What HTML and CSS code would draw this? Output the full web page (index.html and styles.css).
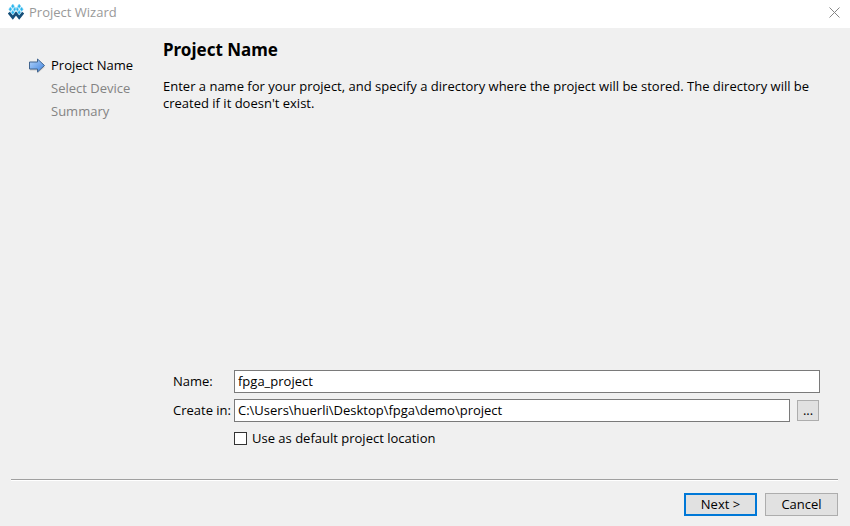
FILE: index.html
```html
<!DOCTYPE html>
<html lang="en">
<head>
<meta charset="utf-8">
<title>Project Wizard</title>
<link rel="stylesheet" href="styles.css">
</head>
<body>
<header class="titlebar">
  <svg class="logo" viewBox="0 0 16 16" aria-hidden="true">
    <path d="M.8 8.500 4.800 13.500 8 9.500 11.200 13.500 15.200 8.500" fill="none" stroke="#164f79" stroke-width="2.800"/>
    <path d="M4.800 0 6.400 2.200 4.800 4.400 3.200 2.200ZM2.400 3 4 5.200 2.400 7.400.8 5.200ZM7 3 8 5.200 6.500 7.400 5.300 5.200ZM4.800 6.200 6.400 8.400 4.800 10.600 3.200 8.400ZM11.200 0 12.800 2.200 11.200 4.400 9.600 2.200ZM13.600 3 15.200 5.200 13.600 7.400 12 5.200ZM9 3 10.700 5.200 9.500 7.400 8 5.200ZM11.200 6.200 12.800 8.400 11.200 10.600 9.600 8.400Z" fill="#29b4ec" stroke="#7fd4f5" stroke-width=".6"/>
  </svg>
  <span class="title">Project Wizard</span>
  <button class="close" type="button" aria-label="Close">
    <svg viewBox="0 0 11 11" aria-hidden="true"><path d="M.5.5l10 10M10.500.5l-10 10" stroke="#858585" fill="none"/></svg>
  </button>
</header>
<div class="wizard">
  <nav class="steps">
    <ol>
      <li class="current">
        <svg class="arrow" viewBox="0 0 17 16" aria-hidden="true">
          <defs><linearGradient id="blue" x1="0" y1="0" x2="1" y2="1"><stop offset="0" stop-color="#b4d5fb"/><stop offset="1" stop-color="#3f83df"/></linearGradient></defs>
          <path d="M2 5.500H9.500V2.500L17 9 9.500 15.500V12.500H2Z" fill="#000" opacity=".15"/>
          <path d="M1.500 4H9.500V1L16.500 7.500 9.500 14V11H1.500Z" fill="url(#blue)" stroke="#41658f"/>
        </svg>
        Project Name
      </li>
      <li>Select Device</li>
      <li>Summary</li>
    </ol>
  </nav>
  <main class="page">
    <h1>Project Name</h1>
    <p>Enter a name for your project, and specify a directory where the project will be stored. The directory will be created if it doesn't exist.</p>
    <form class="fields" id="project">
      <label for="name">Name:</label>
      <input class="text" id="name" type="text" value="fpga_project">
      <label for="location">Create in:</label>
      <div class="location">
        <input class="text" id="location" type="text" value="C:\Users\huerli\Desktop\fpga\demo\project">
        <button class="browse" type="button" aria-label="Browse">...</button>
      </div>
      <div class="default">
        <input id="default" type="checkbox">
        <label for="default">Use as default project location</label>
      </div>
    </form>
  </main>
</div>
<footer class="actions">
  <button class="primary" type="submit" form="project">Next &gt;</button>
  <button type="button">Cancel</button>
</footer>
</body>
</html>
```
FILE: styles.css
```css
* {
  box-sizing: border-box;
}

body {
  margin: 0;
  min-height: 100vh;
  display: flex;
  flex-direction: column;
  background: #f0f0f0;
  color: #000;
  font: 13px/17px "Open Sans", "Noto Sans", sans-serif;
}

button,
input {
  font: inherit;
  color: inherit;
}

.titlebar {
  display: flex;
  align-items: center;
  height: 28px;
  padding: 0 10px 4px 8px;
  background: #fff;
  color: #999;
}

.logo {
  width: 16px;
  height: 16px;
}

.title {
  margin-left: 5px;
}

.close {
  display: flex;
  margin-left: auto;
  padding: 0;
  border: 0;
  background: none;
}

.close svg {
  width: 11px;
  height: 11px;
}

.wizard {
  flex: 1;
  display: flex;
}

.steps {
  flex: none;
  width: 163px;
  padding: 26px 0 0 28px;
  color: #838383;
}

.steps ol {
  margin: 0;
  padding: 0;
  list-style: none;
}

.steps li {
  display: flex;
  align-items: center;
  height: 23px;
  padding-left: 23px;
}

.steps .current {
  gap: 6px;
  padding-left: 0;
  color: #000;
}

.arrow {
  width: 17px;
  height: 16px;
}

.page {
  flex: 1;
  display: flex;
  flex-direction: column;
  padding: 10px 30px 30px 0;
}

h1 {
  margin: 0;
  font-family: "Noto Sans", "Open Sans", sans-serif;
  font-size: 17px;
  line-height: 24px;
}

p {
  margin: 16px 0 0;
}

.fields {
  display: grid;
  grid-template-columns: 55px 1fr;
  align-items: center;
  gap: 6px;
  margin-top: auto;
  padding-left: 10px;
}

.fields > label {
  white-space: nowrap;
}

.location {
  display: flex;
  align-items: center;
  gap: 7px;
  padding-right: 1px;
}

.text {
  flex: 1;
  min-width: 0;
  height: 23px;
  padding: 0 3px 1px;
  border: 1px solid #7a7a7a;
  background: #fff;
}

button {
  border: 1px solid #adadad;
  background: #e1e1e1;
}

.browse {
  width: 22px;
  height: 21px;
  padding: 0;
}

.default {
  grid-column: 2;
  display: flex;
  align-items: center;
  gap: 5px;
  height: 21px;
}

.default input {
  appearance: none;
  width: 13px;
  height: 13px;
  margin: 0;
  border: 1px solid #333;
  background: #fff;
}

.default input:checked {
  background: #0078d7;
}

.actions {
  display: flex;
  justify-content: flex-end;
  gap: 8px;
  margin: 0 12px 0 11px;
  padding: 13px 0 10px;
  border-top: 1px solid #a0a0a0;
  box-shadow: inset 0 1px #fff;
}

.actions button {
  width: 73px;
  height: 23px;
  padding: 0;
}

.actions .primary {
  border: 2px solid #0078d7;
}
```
